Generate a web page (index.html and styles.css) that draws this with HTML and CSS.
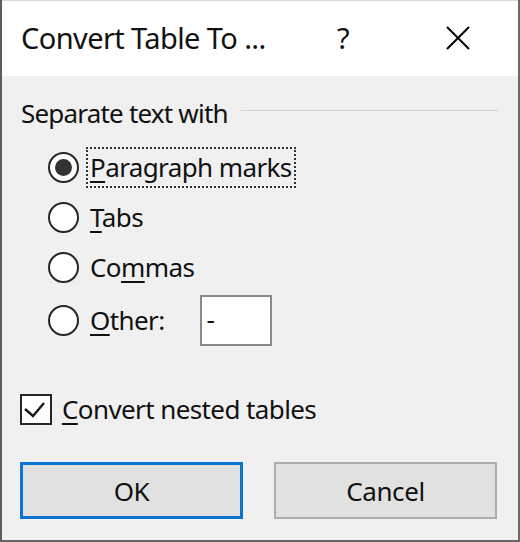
FILE: index.html
```html
<!DOCTYPE html>
<html>
<head>
<meta charset="utf-8">
<link rel="stylesheet" href="styles.css">
</head>
<body>
<div class="dialog">
  <div class="titlebar">
    <span class="title">Convert Table To ...</span>
    <span class="help">?</span>
    <span class="close"><svg width="24" height="24" viewBox="0 0 24 24"><path d="M1 1 L23 23 M23 1 L1 23" stroke="#000" stroke-width="2" fill="none"/></svg></span>
  </div>
  <div class="content">
    <div class="group-head"><span class="group-label">Separate text with</span><span class="rule"></span></div>
    <div class="options">
      <div class="opt"><span class="radio checked"></span><span class="label focus"><u>P</u>aragraph marks</span></div>
      <div class="opt"><span class="radio"></span><span class="label"><u>T</u>abs</span></div>
      <div class="opt"><span class="radio"></span><span class="label">Co<u>m</u>mas</span></div>
      <div class="opt opt-other"><span class="radio"></span><span class="label"><u>O</u>ther:</span><span class="textbox">-</span></div>
    </div>
    <div class="check-row">
      <span class="checkbox"><svg width="28" height="28" viewBox="0 0 28 28"><path d="M3 13 L11 20 L22 7" stroke="#1a1a1a" stroke-width="2.4" fill="none"/></svg></span>
      <span class="label"><u>C</u>onvert nested tables</span>
    </div>
    <div class="buttons">
      <button class="btn btn-default">OK</button>
      <button class="btn">Cancel</button>
    </div>
  </div>
</div>
</body>
</html>
```

FILE: styles.css
```css
* { box-sizing: border-box; }
html, body { margin: 0; padding: 0; }
body {
  font-family: "Noto Sans", "Open Sans", sans-serif;
  color: #111;
  background: #f0f0f0;
}
.dialog {
  width: 520px;
  height: 542px;
  border-left: 2px solid #5c5c5c;
  border-right: 2px solid #6a6a6a;
  border-bottom: 2px solid #666;
  display: flex;
  flex-direction: column;
  background: #f0f0f0;
}
.titlebar {
  height: 76px;
  background: #fff;
  display: grid;
  grid-template-columns: 316px 109px 24px;
  align-items: center;
  padding-left: 19px;
  padding-bottom: 2px;
  border-top: 1px solid #d8d8d8;
}
.title { font-size: 29px; white-space: nowrap; letter-spacing: -0.6px; }
.help { font-size: 29px; }
.close { display: flex; }
.content {
  flex: 1;
  padding: 20px 20px 21px 18px;
  display: flex;
  flex-direction: column;
}
.group-head {
  height: 34px;
  display: flex;
  align-items: center;
  padding-left: 1px;
}
.group-label { font-size: 26px; white-space: nowrap; letter-spacing: -0.8px; }
.rule {
  flex: 1;
  height: 1px;
  background: #d3d3d3;
  margin-left: 13px;
  margin-top: -6px;
}
.options {
  margin-top: 12px;
  padding-left: 28px;
  display: flex;
  flex-direction: column;
}
.opt {
  height: 50px;
  display: flex;
  align-items: center;
}
.opt-other { height: 51px; margin-top: 3px; }
.radio {
  width: 31px;
  height: 31px;
  border: 2px solid #262626;
  border-radius: 50%;
  background: #fff;
  display: flex;
  align-items: center;
  justify-content: center;
  flex: none;
}
.radio.checked::after {
  content: "";
  width: 17px;
  height: 17px;
  border-radius: 50%;
  background: #333;
}
.label {
  font-size: 26px;
  white-space: nowrap;
  margin-left: 11px;
  line-height: 37px;
  letter-spacing: -0.6px;
}
.label u { text-underline-offset: 4px; text-decoration-thickness: 2px; }
.focus {
  margin-left: 7px;
  padding: 0 2px 0 2px;
  border: 2px dotted #333;
}
.textbox {
  width: 72px;
  height: 51px;
  margin-left: 35px;
  background: #fff;
  border: 2px solid #8a8a8a;
  font-size: 26px;
  padding-left: 5px;
  line-height: 44px;
}
.check-row {
  margin-top: 48px;
  height: 31px;
  display: flex;
  align-items: center;
}
.checkbox {
  width: 32px;
  height: 31px;
  border: 2px solid #262626;
  background: #fff;
  display: flex;
  flex: none;
}
.check-row .label { margin-left: 10px; }
.buttons {
  margin-top: 37px;
  display: flex;
  gap: 31px;
}
.btn {
  width: 223px;
  height: 57px;
  background: #e1e1e1;
  border: 2px solid #adadad;
  font-family: "Noto Sans", "Open Sans", sans-serif;
  font-size: 26px;
  letter-spacing: -0.4px;
  color: #111;
  padding: 0;
}
.btn-default { border: 3px solid #0a74d1; }
```
